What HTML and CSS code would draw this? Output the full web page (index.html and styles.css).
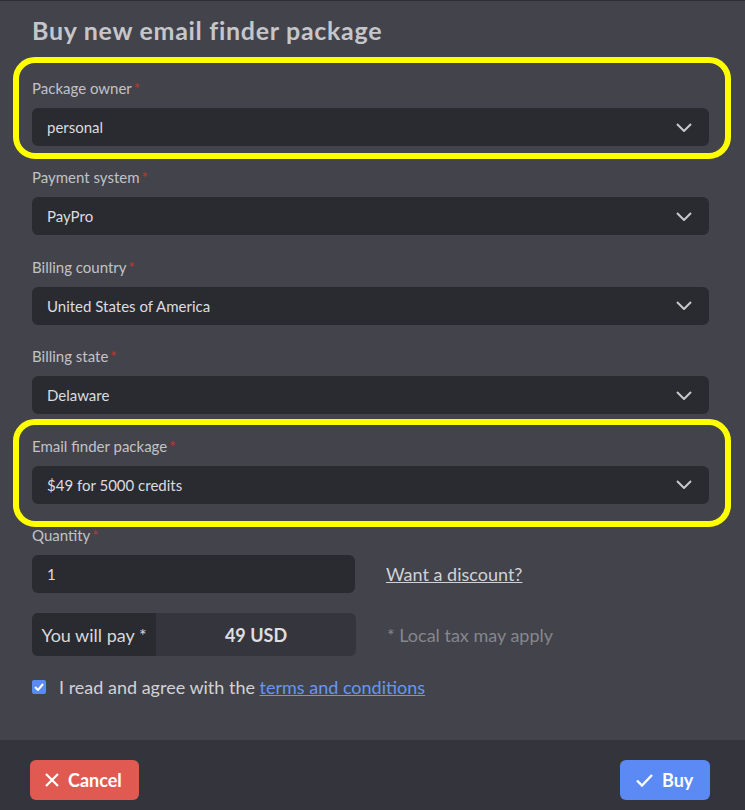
FILE: index.html
```html
<!DOCTYPE html>
<html lang="en">
<head>
<meta charset="UTF-8">
<meta name="viewport" content="width=device-width, initial-scale=1.0">
<title>Buy new email finder package</title>
<link rel="stylesheet" href="styles.css">
</head>
<body>

<div class="modal">
    <div class="modal-body">
        <h1 class="title">Buy new email finder package</h1>

        <div class="field">
            <span class="ring ring-owner"></span>
            <label class="label">Package owner<span class="req">*</span></label>
            <div class="select">
                <span>personal</span>
                <svg class="chevron" width="16" height="9" viewBox="0 0 16 9"><polyline points="1,1 8,8 15,1" fill="none" stroke="#c9c9cc" stroke-width="2"/></svg>
            </div>
        </div>

        <div class="field">
            <label class="label">Payment system<span class="req">*</span></label>
            <div class="select">
                <span>PayPro</span>
                <svg class="chevron" width="16" height="9" viewBox="0 0 16 9"><polyline points="1,1 8,8 15,1" fill="none" stroke="#c9c9cc" stroke-width="2"/></svg>
            </div>
        </div>

        <div class="field">
            <label class="label">Billing country<span class="req">*</span></label>
            <div class="select">
                <span>United States of America</span>
                <svg class="chevron" width="16" height="9" viewBox="0 0 16 9"><polyline points="1,1 8,8 15,1" fill="none" stroke="#c9c9cc" stroke-width="2"/></svg>
            </div>
        </div>

        <div class="field">
            <label class="label">Billing state<span class="req">*</span></label>
            <div class="select">
                <span>Delaware</span>
                <svg class="chevron" width="16" height="9" viewBox="0 0 16 9"><polyline points="1,1 8,8 15,1" fill="none" stroke="#c9c9cc" stroke-width="2"/></svg>
            </div>
        </div>

        <div class="field">
            <span class="ring ring-package"></span>
            <label class="label">Email finder package<span class="req">*</span></label>
            <div class="select">
                <span>$49 for 5000 credits</span>
                <svg class="chevron" width="16" height="9" viewBox="0 0 16 9"><polyline points="1,1 8,8 15,1" fill="none" stroke="#c9c9cc" stroke-width="2"/></svg>
            </div>
        </div>

        <div class="field">
            <label class="label">Quantity<span class="req">*</span></label>
            <div class="row">
                <input class="qty" type="text" value="1">
                <a class="discount" href="#">Want a discount?</a>
            </div>
        </div>

        <div class="row pay-row">
            <div class="pay">
                <span class="pay-label">You will pay *</span>
                <span class="pay-value">49 USD</span>
            </div>
            <span class="tax">* Local tax may apply</span>
        </div>

        <div class="agree">
            <span class="checkbox">
                <svg width="10" height="8" viewBox="0 0 10 8"><polyline points="1,4 4,7 9,1" fill="none" stroke="#fff" stroke-width="2"/></svg>
            </span>
            <span>I read and agree with the <a class="terms" href="#">terms and conditions</a></span>
        </div>
    </div>

    <div class="modal-footer">
        <button class="btn btn-cancel">
            <svg width="14" height="14" viewBox="0 0 14 14"><path d="M1 1 L13 13 M13 1 L1 13" stroke="#fff" stroke-width="2.2" fill="none"/></svg>
            Cancel
        </button>
        <button class="btn btn-buy">
            <svg width="17" height="13" viewBox="0 0 17 13"><polyline points="1,6.5 6,11.5 16,1" fill="none" stroke="#fff" stroke-width="2.4"/></svg>
            Buy
        </button>
    </div>
</div>

</body>
</html>
```

FILE: styles.css
```css
body {
    margin: 0;
    background-color: #42434b;
    font-family: Lato, "Open Sans", sans-serif;
    color: #d6d6da;
}
.modal {
    width: 745px;
    height: 810px;
    display: flex;
    flex-direction: column;
    border-top: 1px solid #2c2d32;
    box-sizing: border-box;
    overflow: hidden;
}
.modal-body {
    padding: 14px 36px 0 32px;
    height: 725px;
}
.title {
    margin: 0 0 32px;
    font-size: 25px;
    line-height: 31px;
    font-weight: 700;
    letter-spacing: 0.7px;
    color: #c6c6ca;
}
.field {
    position: relative;
    margin-bottom: 21.4px;
}
.label {
    display: block;
    font-size: 15px;
    line-height: 20px;
    color: #c2c2c7;
    margin-bottom: 10px;
}
.req {
    color: #c0392b;
    margin-left: 2px;
}
.select {
    height: 38px;
    border-radius: 6px;
    background-color: #2a2b30;
    display: flex;
    align-items: center;
    justify-content: space-between;
    padding: 0 17px 0 15px;
    font-size: 15px;
    color: #dcdce0;
}
.ring {
    position: absolute;
    box-sizing: border-box;
    border: 6px solid #ffff00;
    border-radius: 22px;
}
.ring-owner {
    top: -21px;
    bottom: -13px;
    left: -19px;
    right: -22px;
}
.ring-package {
    top: -17px;
    bottom: -23px;
    left: -19px;
    right: -22px;
}
.row {
    display: flex;
    align-items: center;
    gap: 31px;
}
.qty {
    width: 323px;
    height: 38px;
    box-sizing: border-box;
    border: none;
    border-radius: 6px;
    background-color: #2a2b30;
    padding: 0 15px;
    font-family: inherit;
    font-size: 15px;
    color: #dcdce0;
}
.discount {
    font-size: 18px;
    color: #d2d2d6;
}
.pay-row {
    margin-top: -1px;
    margin-bottom: 20px;
}
.pay {
    width: 324px;
    height: 43px;
    display: flex;
    border-radius: 6px;
    overflow: hidden;
    background-color: #35363d;
    font-size: 18px;
}
.pay-label {
    width: 124px;
    background-color: #2a2b30;
    display: flex;
    align-items: center;
    justify-content: center;
    color: #d8d8dc;
}
.pay-value {
    flex: 1;
    display: flex;
    align-items: center;
    justify-content: center;
    font-weight: 700;
    color: #dedee2;
}
.tax {
    font-size: 18px;
    color: #86878d;
}
.agree {
    display: flex;
    align-items: center;
    gap: 13px;
    font-size: 18px;
    color: #d2d2d6;
}
.checkbox {
    width: 14px;
    height: 14px;
    border-radius: 2px;
    background-color: #5b8af5;
    display: flex;
    align-items: center;
    justify-content: center;
}
.terms {
    color: #6a95f2;
}
.modal-footer {
    flex: 1;
    background-color: #34353c;
    display: flex;
    align-items: flex-start;
    justify-content: space-between;
    padding: 20px 35px 0 30px;
}
.btn {
    height: 40px;
    border: none;
    border-radius: 6px;
    display: flex;
    align-items: center;
    gap: 9px;
    font-family: inherit;
    font-size: 18px;
    font-weight: 700;
    color: #fff;
    cursor: pointer;
}
.btn-cancel {
    width: 109px;
    padding: 0 15px;
    background-color: #e05a52;
}
.btn-buy {
    width: 90px;
    padding: 0 16px;
    background-color: #5b8af5;
}
```
